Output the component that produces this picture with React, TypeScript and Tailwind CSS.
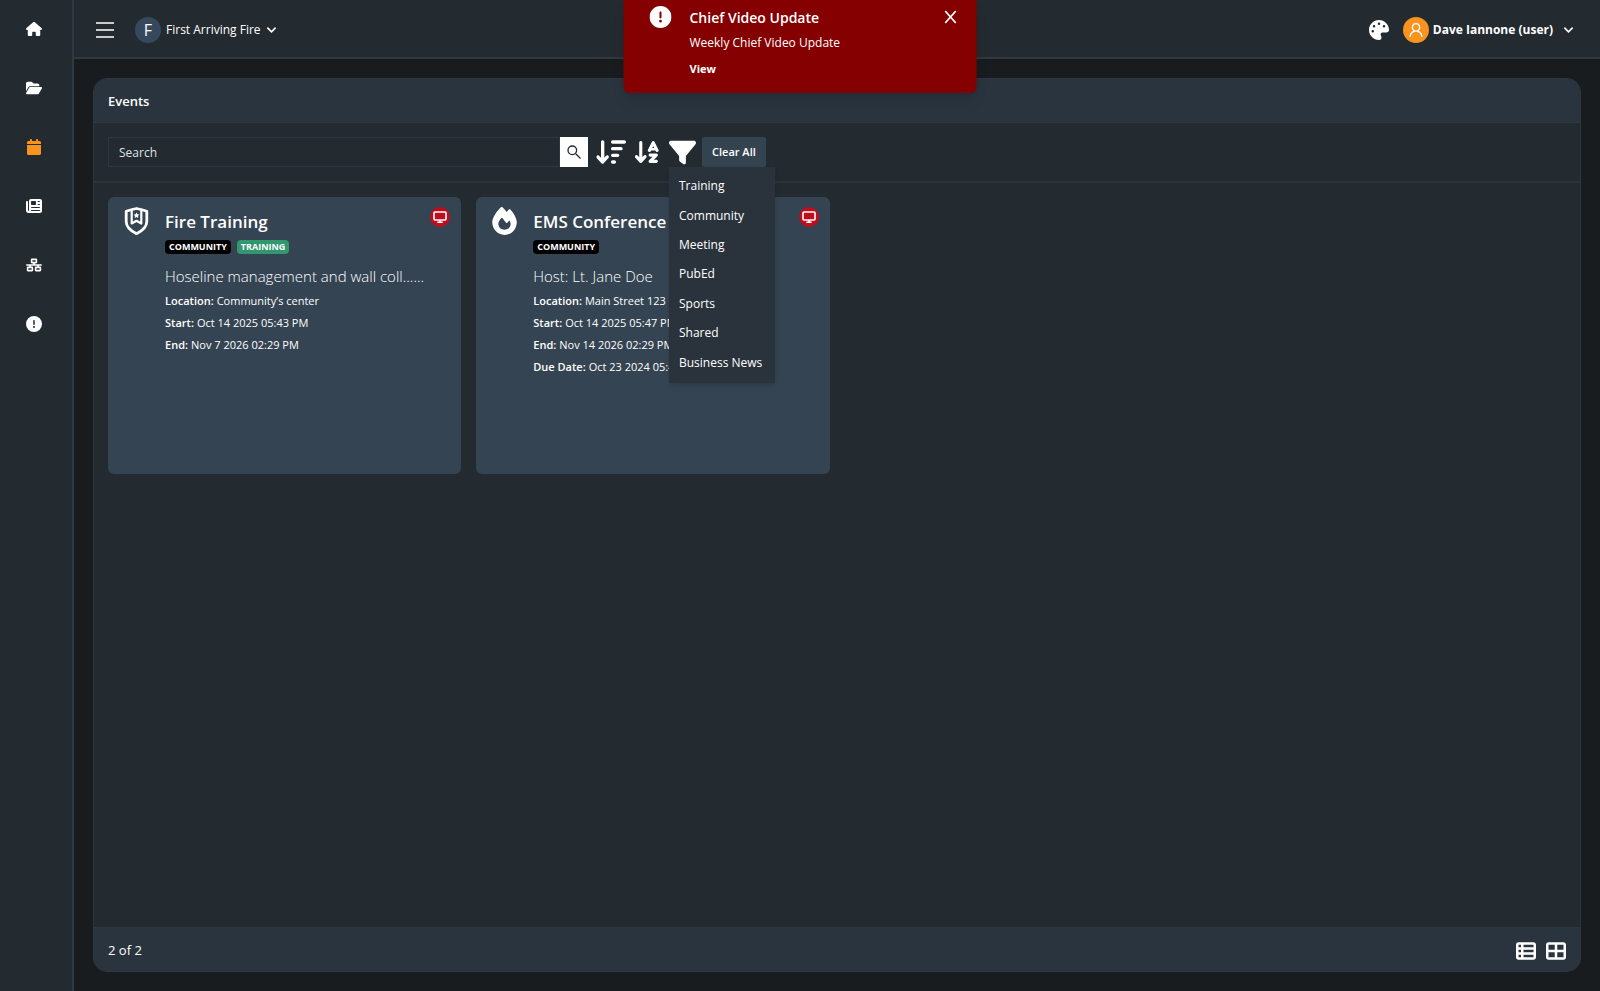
import type { ComponentType, ReactNode } from "react";
import {
  FaArrowDownAZ,
  FaArrowDownWideShort,
  FaCalendar,
  FaCircleExclamation,
  FaFilter,
  FaFire,
  FaFolderOpen,
  FaHouse,
  FaNetworkWired,
  FaNewspaper,
  FaPalette,
  FaTableCellsLarge,
  FaTableList,
} from "react-icons/fa6";
import { AiOutlineUser } from "react-icons/ai";

type IconType = ComponentType<{ className?: string }>;

const navItems: { label: string; icon: IconType; active?: boolean }[] = [
  { label: "Home", icon: FaHouse },
  { label: "Files", icon: FaFolderOpen },
  { label: "Events", icon: FaCalendar, active: true },
  { label: "News", icon: FaNewspaper },
  { label: "Network", icon: FaNetworkWired },
  { label: "Alerts", icon: FaCircleExclamation },
];

const filters = ["Training", "Community", "Meeting", "PubEd", "Sports", "Shared", "Business News"];

type EventItem = {
  title: string;
  icon: IconType;
  tags: string[];
  description: string;
  details: [string, string][];
};

const events: EventItem[] = [
  {
    title: "Fire Training",
    icon: ShieldIcon,
    tags: ["Community", "Training"],
    description: "Hoseline management and wall coll......",
    details: [
      ["Location", "Community’s center"],
      ["Start", "Oct 14 2025 05:43 PM"],
      ["End", "Nov 7 2026 02:29 PM"],
    ],
  },
  {
    title: "EMS Conference",
    icon: FaFire,
    tags: ["Community"],
    description: "Host: Lt. Jane Doe",
    details: [
      ["Location", "Main Street 123"],
      ["Start", "Oct 14 2025 05:47 PM"],
      ["End", "Nov 14 2026 02:29 PM"],
      ["Due Date", "Oct 23 2024 05:47 PM"],
    ],
  },
];

const tagColors: Record<string, string> = {
  Community: "bg-black",
  Training: "bg-[#31976e]",
};

function ShieldIcon({ className }: { className?: string }) {
  return (
    <svg viewBox="0 0 24 28" fill="none" stroke="currentColor" className={className} aria-hidden="true">
      <path d="M12 1.500c3 .600 6.500 1.400 10.300 2.700v10.300c0 5.500-4.300 9.200-10.300 12.200-6-3-10.300-6.700-10.300-12.200V4.200C5.500 2.900 9 2.100 12 1.500z" strokeWidth="2.800" strokeLinejoin="round" />
      <path d="M7.200 3.300v13.200L12 13.800l4.800 2.700V3.300" strokeWidth="2.200" strokeLinejoin="round" />
      <path d="m12 5.500.9 1.800 2 .3-1.400 1.400.3 2-1.800-.9-1.800.9.3-2-1.400-1.400 2-.3z" fill="currentColor" stroke="none" />
    </svg>
  );
}

function MonitorIcon({ className }: { className?: string }) {
  return (
    <svg viewBox="0 0 14 12" fill="none" stroke="currentColor" className={className} aria-hidden="true">
      <rect x="1" y="1" width="12" height="8" rx="1" strokeWidth="1.600" />
      <path d="M7 9v2.200M4.300 11.200h5.400" strokeWidth="1.600" />
    </svg>
  );
}

function ChevronDown({ className }: { className?: string }) {
  return (
    <svg viewBox="0 0 12 8" fill="none" stroke="currentColor" strokeWidth="1.800" className={className} aria-hidden="true">
      <path d="m1.500 1.500 4.500 4.500 4.500-4.500" />
    </svg>
  );
}

function IconButton({ label, children }: { label: string; children: ReactNode }) {
  return (
    <button type="button" aria-label={label} className="flex shrink-0 items-center justify-center">
      {children}
    </button>
  );
}

function Sidebar() {
  return (
    <nav aria-label="Main" className="flex w-[74px] shrink-0 flex-col gap-10 border-r-2 border-[#303842] bg-[#232a30] pt-[19px] pr-1">
      {navItems.map(({ label, icon: Icon, active }) => (
        <a key={label} href="#" aria-label={label} className={active ? "flex h-[19px] items-center justify-center text-[#f7931e]" : "flex h-[19px] items-center justify-center text-white"}>
          <Icon className="size-4" />
        </a>
      ))}
    </nav>
  );
}

function TopBar() {
  return (
    <header className="flex h-[59px] shrink-0 items-center justify-between border-b-2 border-[#303842] bg-[#232a30] pt-0.5 pr-[26px] pl-[22px]">
      <div className="flex items-center gap-[21px]">
        <IconButton label="Toggle menu">
          <svg viewBox="0 0 18 16" className="h-4 w-[18px]" stroke="currentColor" strokeWidth="1.600" aria-hidden="true">
            <path d="M0 1h18M0 8h18M0 15h18" />
          </svg>
        </IconButton>
        <button type="button" className="flex items-center gap-[5px]">
          <span className="flex size-[26px] items-center justify-center rounded-full bg-[#36495c] text-base">F</span>
          <span className="text-[12px]">First Arriving Fire</span>
          <ChevronDown className="h-2 w-[11px]" />
        </button>
      </div>
      <div className="flex items-center gap-3.5">
        <IconButton label="Theme">
          <FaPalette className="size-5" />
        </IconButton>
        <button type="button" className="flex items-center gap-1">
          <span className="flex size-[26px] items-center justify-center rounded-full bg-[#f7931e]">
            <AiOutlineUser className="size-[18px]" />
          </span>
          <span className="text-[12px] font-bold">Dave Iannone (user)</span>
          <ChevronDown className="ml-1.5 h-2 w-[11px]" />
        </button>
      </div>
    </header>
  );
}

function Notification() {
  return (
    <div role="alert" className="absolute top-0 left-1/2 z-20 flex h-[93px] w-[353px] -translate-x-1/2 items-start rounded-b-md bg-[#850000] pt-1.5 pr-5 pl-[26px] shadow-lg">
      <FaCircleExclamation className="mr-[18px] size-[22px] shrink-0" />
      <div className="flex grow flex-col items-start">
        <h2 className="text-[14px] leading-6 font-semibold">Chief Video Update</h2>
        <p className="text-[12px] leading-[25px]">Weekly Chief Video Update</p>
        <a href="#" className="mt-0.5 text-[11px] leading-6 font-bold">View</a>
      </div>
      <IconButton label="Dismiss">
        <svg viewBox="0 0 12 14" className="mt-1 h-3.5 w-3" stroke="currentColor" strokeWidth="1.800" aria-hidden="true">
          <path d="m.700 1 10.600 12M11.300 1 .700 13" />
        </svg>
      </IconButton>
    </div>
  );
}

function Toolbar() {
  return (
    <div className="flex items-center border-b-2 border-[#2b343d] px-3.5 py-3.5">
      <form role="search" className="flex w-[480px] shrink-0">
        <input
          type="text"
          aria-label="Search"
          placeholder="Search"
          className="h-[30px] min-w-0 grow border border-[#2e3740] bg-transparent px-2.5 text-[12px] placeholder:text-[#dfe2e4] outline-none"
        />
        <button type="submit" aria-label="Search" className="flex w-7 items-center justify-center bg-white text-[#232a30]">
          <svg viewBox="0 0 14 14" className="size-3.5" fill="none" stroke="currentColor" strokeWidth="1.300" aria-hidden="true">
            <circle cx="5.300" cy="5.300" r="4.300" />
            <path d="m8.500 8.500 5 5" />
          </svg>
        </button>
      </form>
      <div className="ml-2 flex items-center">
        <IconButton label="Sort by date">
          <FaArrowDownWideShort className="size-[30px]" />
        </IconButton>
        <span className="w-[7px]" />
        <IconButton label="Sort alphabetically">
          <FaArrowDownAZ className="size-7" />
        </IconButton>
        <div className="relative ml-2 flex">
          <IconButton label="Filter">
            <FaFilter className="size-[27px]" />
          </IconButton>
          <ul className="absolute top-7 left-0 z-10 flex h-[216px] w-[106px] flex-col bg-[#2a333c] py-[5px] shadow-md">
            {filters.map((name) => (
              <li key={name} className="flex flex-1">
                <button type="button" className="flex w-full items-center px-2.5 text-[12px] whitespace-nowrap">
                  {name}
                </button>
              </li>
            ))}
          </ul>
        </div>
      </div>
      <button type="button" className="ml-1.5 h-[30px] rounded-xs bg-[#344350] px-2.5 text-[11px] font-semibold">
        Clear All
      </button>
    </div>
  );
}

function EventCard({ event }: { event: EventItem }) {
  const Icon = event.icon;
  return (
    <article className="flex h-[277px] items-start rounded-md bg-[#344452] pt-2.5 pr-[11px] pl-[15px]">
      <Icon className="mr-[15px] h-7 w-[27px] shrink-0" />
      <div className="min-w-0 grow">
        <h2 className="pt-[3px] text-[17px] leading-6 font-semibold">{event.title}</h2>
        <ul className="mt-1.5 flex gap-1.5">
          {event.tags.map((tag) => (
            <li key={tag} className={`${tagColors[tag]} rounded-sm px-1 text-[9px] leading-3.5 font-bold uppercase`}>
              {tag}
            </li>
          ))}
        </ul>
        <p className="mt-2.5 mb-0.5 text-[15px] leading-6 font-light whitespace-nowrap">{event.description}</p>
        <dl className="text-[11px] leading-[22px]">
          {event.details.map(([name, value]) => (
            <div key={name} className="flex gap-[3px]">
              <dt className="font-semibold">{name}:</dt>
              <dd>{value}</dd>
            </div>
          ))}
        </dl>
      </div>
      <span className="flex size-5 shrink-0 items-center justify-center rounded-full bg-[#c00d1e]">
        <MonitorIcon className="h-3 w-3.5" />
      </span>
    </article>
  );
}

export default function App() {
  return (
    <div className="relative flex min-h-screen bg-[#181c1e] font-['Open_Sans','Noto_Sans',sans-serif] text-white">
      <Sidebar />
      <div className="flex min-w-0 grow flex-col">
        <TopBar />
        <main className="flex grow px-[19px] py-[19px]">
          <section className="flex grow flex-col rounded-[14px] border border-[#2e3740] bg-[#232a30]">
            <h1 className="flex h-11 items-center rounded-t-[13px] border-b border-[#2e3842] bg-[#2a343e] px-3.5 pt-0.5 text-[13px] font-semibold">
              Events
            </h1>
            <Toolbar />
            <div className="grid grow grid-cols-4 content-start gap-[15px] px-3.5 pt-3.5">
              {events.map((event) => (
                <EventCard key={event.title} event={event} />
              ))}
            </div>
            <footer className="flex h-11 items-center justify-between rounded-b-[13px] border-t border-[#2e3842] bg-[#2a343e] px-3.5 pt-0.5">
              <span className="text-[13px]">2 of 2</span>
              <div className="flex gap-2.5">
                <IconButton label="List view">
                  <FaTableList className="size-5" />
                </IconButton>
                <IconButton label="Grid view">
                  <FaTableCellsLarge className="size-5" />
                </IconButton>
              </div>
            </footer>
          </section>
        </main>
      </div>
      <Notification />
    </div>
  );
}
